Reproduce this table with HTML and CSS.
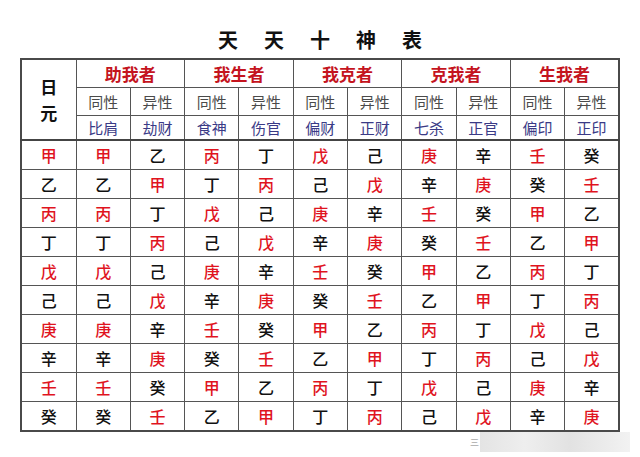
FILE: index.html
```html
<!DOCTYPE html>
<html lang="zh">
<head>
<meta charset="utf-8">
<link rel="stylesheet" href="styles.css">
</head>
<body>
<div class="page">
  <h1 class="title">天天十神表</h1>
  <table class="gods">
    <colgroup>
      <col class="c0"><col><col><col><col><col><col><col><col><col><col>
    </colgroup>
    <thead>
      <tr class="h1">
        <th rowspan="3" class="dm"><span>日</span><span>元</span></th>
        <th colspan="2" class="grp">助我者</th>
        <th colspan="2" class="grp">我生者</th>
        <th colspan="2" class="grp">我克者</th>
        <th colspan="2" class="grp">克我者</th>
        <th colspan="2" class="grp">生我者</th>
      </tr>
      <tr class="h2">
        <th class="sx">同性</th><th class="sx">异性</th>
        <th class="sx">同性</th><th class="sx">异性</th>
        <th class="sx">同性</th><th class="sx">异性</th>
        <th class="sx">同性</th><th class="sx">异性</th>
        <th class="sx">同性</th><th class="sx">异性</th>
      </tr>
      <tr class="h3">
        <th class="nm">比肩</th><th class="nm">劫财</th>
        <th class="nm">食神</th><th class="nm">伤官</th>
        <th class="nm">偏财</th><th class="nm">正财</th>
        <th class="nm">七杀</th><th class="nm">正官</th>
        <th class="nm">偏印</th><th class="nm">正印</th>
      </tr>
    </thead>
    <tbody>
      <tr><td class="r">甲</td><td class="r">甲</td><td>乙</td><td class="r">丙</td><td>丁</td><td class="r">戊</td><td>己</td><td class="r">庚</td><td>辛</td><td class="r">壬</td><td>癸</td></tr>
      <tr><td>乙</td><td>乙</td><td class="r">甲</td><td>丁</td><td class="r">丙</td><td>己</td><td class="r">戊</td><td>辛</td><td class="r">庚</td><td>癸</td><td class="r">壬</td></tr>
      <tr><td class="r">丙</td><td class="r">丙</td><td>丁</td><td class="r">戊</td><td>己</td><td class="r">庚</td><td>辛</td><td class="r">壬</td><td>癸</td><td class="r">甲</td><td>乙</td></tr>
      <tr><td>丁</td><td>丁</td><td class="r">丙</td><td>己</td><td class="r">戊</td><td>辛</td><td class="r">庚</td><td>癸</td><td class="r">壬</td><td>乙</td><td class="r">甲</td></tr>
      <tr><td class="r">戊</td><td class="r">戊</td><td>己</td><td class="r">庚</td><td>辛</td><td class="r">壬</td><td>癸</td><td class="r">甲</td><td>乙</td><td class="r">丙</td><td>丁</td></tr>
      <tr><td>己</td><td>己</td><td class="r">戊</td><td>辛</td><td class="r">庚</td><td>癸</td><td class="r">壬</td><td>乙</td><td class="r">甲</td><td>丁</td><td class="r">丙</td></tr>
      <tr><td class="r">庚</td><td class="r">庚</td><td>辛</td><td class="r">壬</td><td>癸</td><td class="r">甲</td><td>乙</td><td class="r">丙</td><td>丁</td><td class="r">戊</td><td>己</td></tr>
      <tr><td>辛</td><td>辛</td><td class="r">庚</td><td>癸</td><td class="r">壬</td><td>乙</td><td class="r">甲</td><td>丁</td><td class="r">丙</td><td>己</td><td class="r">戊</td></tr>
      <tr><td class="r">壬</td><td class="r">壬</td><td>癸</td><td class="r">甲</td><td>乙</td><td class="r">丙</td><td>丁</td><td class="r">戊</td><td>己</td><td class="r">庚</td><td>辛</td></tr>
      <tr><td>癸</td><td>癸</td><td class="r">壬</td><td>乙</td><td class="r">甲</td><td>丁</td><td class="r">丙</td><td>己</td><td class="r">戊</td><td>辛</td><td class="r">庚</td></tr>
    </tbody>
  </table>
  <div class="mark"><span class="mark-glyph">三</span><span class="mark-blur"></span></div>
</div>
</body>
</html>
```
FILE: styles.css
```css
html, body {
  margin: 0;
  padding: 0;
  background: #ffffff;
}
body {
  font-family: "Noto Sans CJK SC", "Noto Sans", sans-serif;
  color: #111;
}
.page {
  position: relative;
  width: 640px;
  height: 457px;
  padding: 28px 20px 0 20px;
  box-sizing: border-box;
}
.title {
  margin: 0;
  height: 30px;
  line-height: 24px;
  font-size: 20px;
  font-weight: 700;
  text-align: center;
  letter-spacing: 26px;
  text-indent: 26px;
  color: #111;
}
.gods {
  border-collapse: collapse;
  width: 600px;
  table-layout: fixed;
  border: 2px solid #4a4a4a;
}
.gods col.c0 { width: 55px; }
.gods th, .gods td {
  border: 1px solid #555;
  padding: 0;
  text-align: center;
  vertical-align: middle;
  line-height: 1;
}
.gods .h1 th { height: 27px; }
.gods .h2 th { height: 27px; }
.gods .h3 th { height: 23px; }
.gods thead { border-bottom: 2px solid #444; }
.gods .dm {
  font-size: 17px;
  font-weight: 700;
  color: #111;
}
.gods .dm span {
  display: block;
  line-height: 26px;
}
.grp {
  font-size: 17px;
  font-weight: 700;
  color: #c4141e;
}
.sx {
  font-size: 15px;
  font-weight: 400;
  color: #4a4a4a;
}
.nm {
  font-size: 15px;
  font-weight: 400;
  color: #3a3a86;
}
.gods td {
  height: 28px;
  font-size: 16px;
  font-weight: 500;
  color: #111;
}
.gods td.r {
  color: #e0141e;
}
.mark {
  position: absolute;
  left: 470px;
  top: 432px;
  width: 160px;
  height: 20px;
  display: flex;
  align-items: center;
}
.mark-glyph {
  font-size: 9px;
  color: #aaa;
  width: 10px;
}
.mark-blur {
  flex: 1;
  height: 20px;
  background: linear-gradient(90deg, #e4e4e4, #eeeeee 30%, #e2e2e2 60%, #ececec 85%, #f2f2f2);
}
```
